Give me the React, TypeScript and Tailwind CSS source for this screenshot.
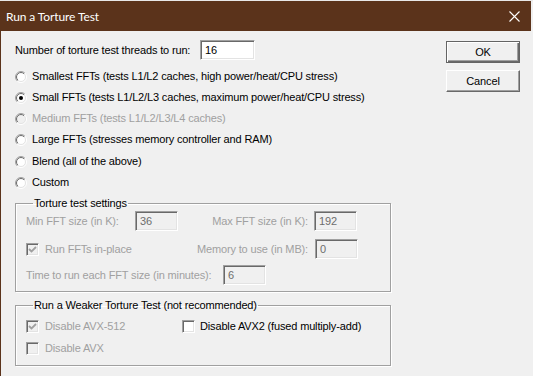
import React from "react";

function Radio({ checked, disabled }: { checked?: boolean; disabled?: boolean }) {
  return (
    <svg width="12" height="12" viewBox="0 0 12 12" className="shrink-0">
      <defs>
        <linearGradient id="ro" x1="0" y1="0" x2="1" y2="1">
          <stop offset="0.5" stopColor="#a0a0a0" />
          <stop offset="0.5" stopColor="#ffffff" />
        </linearGradient>
        <linearGradient id="ri" x1="0" y1="0" x2="1" y2="1">
          <stop offset="0.5" stopColor="#696969" />
          <stop offset="0.5" stopColor="#e3e3e3" />
        </linearGradient>
      </defs>
      <circle cx="6" cy="6" r="5.5" fill="none" stroke="url(#ro)" />
      <circle cx="6" cy="6" r="4.5" fill={disabled ? "#f0f0f0" : "#ffffff"} stroke="url(#ri)" />
      {checked && <circle cx="6" cy="6" r="2" fill="#000000" />}
    </svg>
  );
}

function Check({ checked, disabled }: { checked?: boolean; disabled?: boolean }) {
  return (
    <div
      className={`w-[13px] h-[13px] shrink-0 border border-t-[#a0a0a0] border-l-[#a0a0a0] border-r-white border-b-white shadow-[inset_1px_1px_0_#696969,inset_-1px_-1px_0_#e3e3e3] flex items-center justify-center ${
        disabled ? "bg-[#f0f0f0]" : "bg-white"
      }`}
    >
      {checked && (
        <svg width="9" height="9" viewBox="0 0 9 9">
          <polyline points="1,4 3.5,6.5 8,2" fill="none" stroke={disabled ? "#a0a0a0" : "#000"} strokeWidth="1.8" />
        </svg>
      )}
    </div>
  );
}

function Edit({ value, w, disabled }: { value: string; w: string; disabled?: boolean }) {
  return (
    <div
      className={`${w} h-[20px] shrink-0 border border-t-[#a0a0a0] border-l-[#a0a0a0] border-r-white border-b-white shadow-[inset_1px_1px_0_#696969,inset_-1px_-1px_0_#e3e3e3] flex items-center pl-[4px] ${
        disabled ? "bg-[#f0f0f0] text-[#6d6d6d]" : "bg-white text-black"
      }`}
    >
      {value}
    </div>
  );
}

const radios = [
  { label: "Smallest FFTs (tests L1/L2 caches, high power/heat/CPU stress)" },
  { label: "Small FFTs (tests L1/L2/L3 caches, maximum power/heat/CPU stress)", checked: true },
  { label: "Medium FFTs (tests L1/L2/L3/L4 caches)", disabled: true },
  { label: "Large FFTs (stresses memory controller and RAM)" },
  { label: "Blend (all of the above)" },
  { label: "Custom" },
];

export default function App() {
  return (
    <div className="w-[533px] h-[376px] bg-[#f0f0f0] flex flex-col overflow-hidden font-['Liberation_Sans',Arial,sans-serif] text-[11px] tracking-[-0.15px] text-black">
      <div className="h-[1px] bg-[#e8e8e8]" />
      <div className="h-[30px] bg-[#5b331b] mr-[2px] flex items-center justify-between pl-[6px] pr-[11px]">
        <span className="text-white text-[12px] tracking-[-0.1px] font-['Lato',sans-serif] pt-[1px]">Run a Torture Test</span>
        <svg width="11" height="11" viewBox="0 0 11 11">
          <path d="M0.5 0.5 L10.5 10.5 M10.5 0.5 L0.5 10.5" stroke="#ffffff" strokeWidth="1.1" />
        </svg>
      </div>
      <div className="flex-1 flex border-l border-[#5b331b]">
        <div className="w-[390px] pl-[14px] flex flex-col">
          <div className="flex items-center h-[20px] mt-[9px]">
            <span className="w-[185px]">Number of torture test threads to run:</span>
            <Edit value="16" w="w-[55px]" />
          </div>
          <div className="flex flex-col mt-[6px]">
            {radios.map((r, i) => (
              <div key={i} className={`flex items-center h-[21px] gap-[5px] ${i === 4 ? "mt-[1px]" : ""}`}>
                <Radio checked={r.checked} disabled={r.disabled} />
                <span className={r.disabled ? "text-[#a0a0a0]" : ""}>{r.label}</span>
              </div>
            ))}
          </div>
          <fieldset className="mt-[3px] w-[376px] border border-[#a0a0a0] shadow-[1px_1px_0_#ffffff,inset_1px_1px_0_#ffffff] pl-[10px] pb-[6px]">
            <legend className="ml-[7px] px-[1px] h-[14px] leading-[14px]">Torture test settings</legend>
            <div className="flex items-center h-[20px] mt-[1px] text-[#a0a0a0]">
              <span className="w-[109px]">Min FFT size (in K):</span>
              <Edit value="36" w="w-[43px]" disabled />
              <span className="w-[136px] text-right pr-[6px]">Max FFT size (in K):</span>
              <Edit value="192" w="w-[43px]" disabled />
            </div>
            <div className="flex items-center h-[20px] mt-[8px] text-[#a0a0a0]">
              <div className="w-[152px] flex items-center gap-[6px]">
                <Check checked disabled />
                <span>Run FFTs in-place</span>
              </div>
              <span className="w-[137px] text-right pr-[7px]">Memory to use (in MB):</span>
              <Edit value="0" w="w-[43px]" disabled />
            </div>
            <div className="flex items-center h-[20px] mt-[6px] text-[#a0a0a0]">
              <span className="w-[197px]">Time to run each FFT size (in minutes):</span>
              <Edit value="6" w="w-[43px]" disabled />
            </div>
          </fieldset>
          <fieldset className="mt-[6px] w-[376px] border border-[#a0a0a0] shadow-[1px_1px_0_#ffffff,inset_1px_1px_0_#ffffff] pl-[10px] pb-[10px]">
            <legend className="ml-[7px] px-[1px] h-[14px] leading-[14px]">Run a Weaker Torture Test (not recommended)</legend>
            <div className="flex items-center h-[13px] mt-[8px]">
              <div className="w-[156px] flex items-center gap-[6px] text-[#a0a0a0]">
                <Check checked disabled />
                <span>Disable AVX-512</span>
              </div>
              <div className="flex items-center gap-[5px]">
                <Check />
                <span>Disable AVX2 (fused multiply-add)</span>
              </div>
            </div>
            <div className="flex items-center h-[13px] mt-[9px]">
              <div className="flex items-center gap-[6px] text-[#a0a0a0]">
                <Check disabled />
                <span>Disable AVX</span>
              </div>
            </div>
          </fieldset>
        </div>
        <div className="ml-[55px] flex flex-col gap-[7px] pt-[10px]">
          <button className="w-[74px] h-[22px] border border-[#646464] bg-[#f0f0f0] shadow-[inset_1px_1px_0_#ffffff,inset_-1px_-1px_0_#696969,inset_-2px_-2px_0_#a0a0a0] flex items-center justify-center">
            OK
          </button>
          <button className="w-[74px] h-[22px] border border-t-white border-l-white border-r-[#696969] border-b-[#696969] bg-[#f0f0f0] shadow-[inset_-1px_-1px_0_#a0a0a0] flex items-center justify-center">
            Cancel
          </button>
        </div>
      </div>
    </div>
  );
}
